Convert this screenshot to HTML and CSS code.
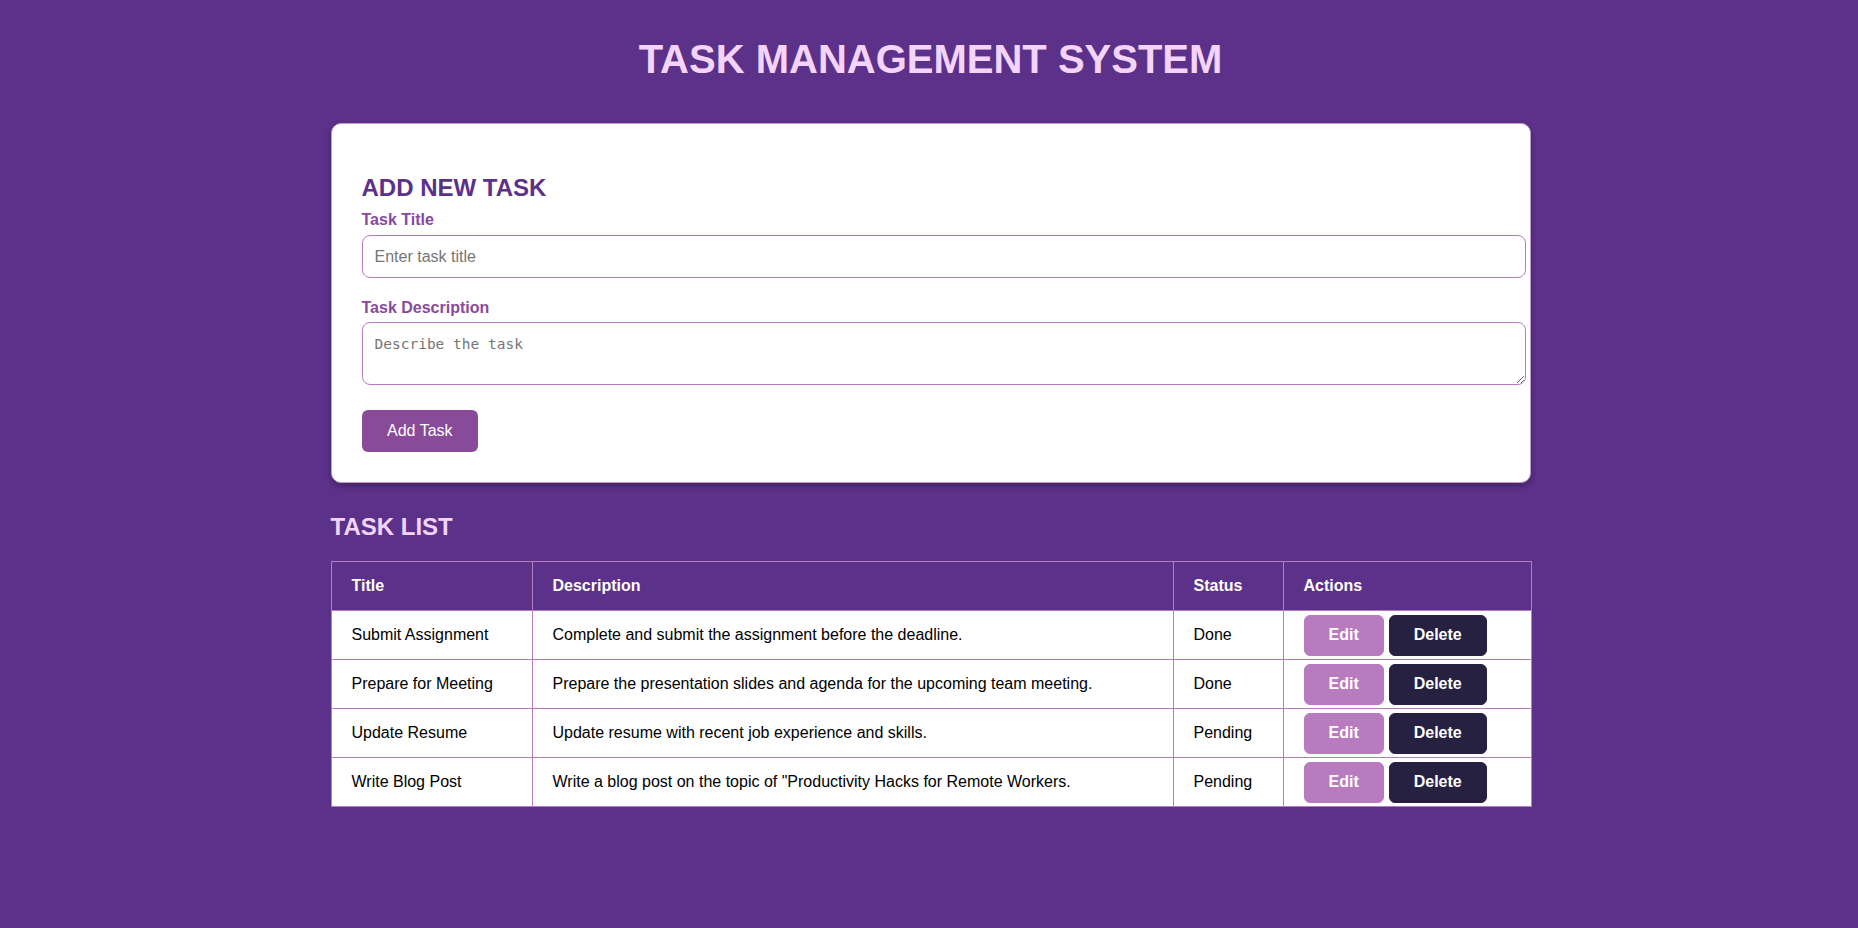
FILE: index.html
```html
<!DOCTYPE html>
<html lang="en">
<head>
<meta charset="utf-8">
<title>Task Management System</title>
<link rel="stylesheet" href="styles.css">
</head>
<body>
<header class="page-header">
  <h1 class="page-title">TASK MANAGEMENT SYSTEM</h1>
</header>
<main class="container">
  <section class="card">
    <h2 class="card-title">ADD NEW TASK</h2>
    <form class="task-form">
      <label class="field-label" for="title">Task Title</label>
      <input class="field-input" id="title" type="text" placeholder="Enter task title">
      <label class="field-label field-label-desc" for="desc">Task Description</label>
      <textarea class="field-textarea" id="desc" placeholder="Describe the task"></textarea>
      <button class="btn-add" type="button">Add Task</button>
    </form>
  </section>

  <h2 class="list-title">TASK LIST</h2>
  <table class="task-table">
    <colgroup>
      <col class="col-title">
      <col class="col-desc">
      <col class="col-status">
      <col class="col-actions">
    </colgroup>
    <thead>
      <tr>
        <th>Title</th>
        <th>Description</th>
        <th>Status</th>
        <th>Actions</th>
      </tr>
    </thead>
    <tbody>
      <tr>
        <td>Submit Assignment</td>
        <td>Complete and submit the assignment before the deadline.</td>
        <td>Done</td>
        <td class="actions"><div class="action-group"><button class="btn-edit" type="button">Edit</button><button class="btn-delete" type="button">Delete</button></div></td>
      </tr>
      <tr>
        <td>Prepare for Meeting</td>
        <td>Prepare the presentation slides and agenda for the upcoming team meeting.</td>
        <td>Done</td>
        <td class="actions"><div class="action-group"><button class="btn-edit" type="button">Edit</button><button class="btn-delete" type="button">Delete</button></div></td>
      </tr>
      <tr>
        <td>Update Resume</td>
        <td>Update resume with recent job experience and skills.</td>
        <td>Pending</td>
        <td class="actions"><div class="action-group"><button class="btn-edit" type="button">Edit</button><button class="btn-delete" type="button">Delete</button></div></td>
      </tr>
      <tr>
        <td>Write Blog Post</td>
        <td>Write a blog post on the topic of "Productivity Hacks for Remote Workers.</td>
        <td>Pending</td>
        <td class="actions"><div class="action-group"><button class="btn-edit" type="button">Edit</button><button class="btn-delete" type="button">Delete</button></div></td>
      </tr>
    </tbody>
  </table>
</main>
</body>
</html>
```

FILE: styles.css
```css
html, body {
  margin: 0;
  padding: 0;
}

body {
  background: #5c318a;
  font-family: "Liberation Sans", Arial, sans-serif;
  font-size: 16px;
  color: #000;
  min-height: 928px;
  padding-left: 3px;
}

.page-header {
  padding-top: 36px;
}

.page-title {
  margin: 0;
  text-align: center;
  font-size: 40px;
  font-weight: bold;
  line-height: 46px;
  color: #f4d4fb;
}

.container {
  width: 1200px;
  margin: 41px auto 0;
}

.card {
  background: #fff;
  border: 1px solid #c89bd0;
  border-radius: 10px;
  padding: 30px;
  box-shadow: 0 3px 6px rgba(0, 0, 0, 0.3);
}

.card-title {
  margin: 20px 0 9px;
  font-size: 24px;
  line-height: 27.6px;
  font-weight: bold;
  color: #5c318a;
}

.task-form {
  display: block;
}

.field-label {
  display: block;
  font-size: 16px;
  font-weight: bold;
  line-height: 18.4px;
  color: #884a9b;
  margin-bottom: 6px;
}

.field-label-desc {
  margin-bottom: 5px;
}

.field-input {
  display: block;
  width: 100%;
  height: 21px;
  padding: 10px 12px;
  margin: 0 0 21px;
  border: 1px solid #b87bbf;
  border-radius: 8px;
  font-family: "Liberation Sans", Arial, sans-serif;
  font-size: 16px;
  color: #000;
  background: #fff;
  outline: none;
}

.field-input::placeholder {
  color: #767676;
}

.field-textarea {
  display: block;
  width: 100%;
  height: 37px;
  padding: 13px 12px 11px;
  margin: 0 0 24.6px;
  border: 1px solid #b87bbf;
  border-radius: 8px;
  font-family: "DejaVu Sans Mono", monospace;
  font-size: 14.5px;
  color: #000;
  background: #fff;
  outline: none;
}

.field-textarea::placeholder {
  color: #767676;
}

.btn-add {
  display: block;
  padding: 12px 25.5px;
  border: none;
  border-radius: 6px;
  background: #884a99;
  color: #fff;
  font-family: "Liberation Sans", Arial, sans-serif;
  font-size: 16px;
  line-height: 17.7px;
  cursor: pointer;
}

.list-title {
  margin: 30px 0 21px;
  font-size: 24px;
  line-height: 27.6px;
  font-weight: bold;
  color: #f4d4fb;
}

.task-table {
  width: 1200px;
  border-collapse: collapse;
  table-layout: fixed;
  background: #fff;
}

.col-title { width: 201px; }
.col-desc { width: 641px; }
.col-status { width: 110px; }
.col-actions { width: 248px; }

.task-table th,
.task-table td {
  border: 1px solid #b87bbf;
  text-align: left;
  font-size: 16px;
  line-height: 18.4px;
  padding: 14.8px 20px;
  vertical-align: middle;
}

.task-table th {
  background: #5c318a;
  color: #fff;
  font-weight: bold;
}

.task-table td {
  color: #000;
}

.task-table td.actions {
  padding: 3.8px 20px;
}

.action-group {
  display: flex;
  gap: 5px;
}

.btn-edit,
.btn-delete {
  padding: 10px 24px;
  border-radius: 6px;
  font-family: "Liberation Sans", Arial, sans-serif;
  font-size: 16px;
  line-height: 18.4px;
  font-weight: bold;
  color: #fff;
  cursor: pointer;
}

.btn-edit {
  background: #b87bbf;
  border: 1px solid #b87bbf;
}

.btn-delete {
  background: #262041;
  border: 1px solid #262041;
}
```
